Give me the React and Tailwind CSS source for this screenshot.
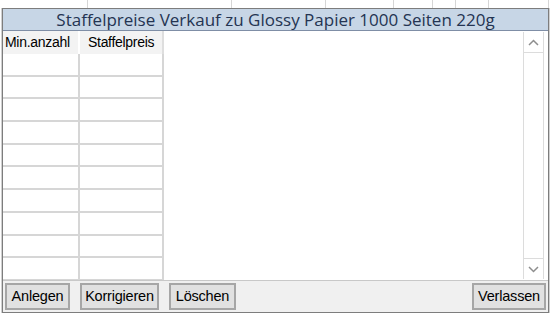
import React from "react";

const ROWS = Array.from({ length: 10 });

function Btn({ children, w }) {
  return (
    <div
      className={`h-[27px] ${w} flex items-center justify-center bg-[#e1e1e1] border-2 border-[#a6a6a6] text-[14.5px] text-black leading-none tracking-[-0.2px]`}
      style={{ fontFamily: '"Liberation Sans", Arial, sans-serif' }}
    >
      {children}
    </div>
  );
}

export default function App() {
  const bgCells = [88, 144, 94, 68, 39, 23, 33, 60];
  return (
    <div className="w-[552px] h-[313px] bg-white overflow-hidden flex flex-col">
      <div className="h-[8px] flex shrink-0">
        {bgCells.map((w, i) => (
          <div key={i} className="h-full border-r border-[#d6d6d6]" style={{ width: w }} />
        ))}
      </div>
      <div className="flex flex-1 min-h-0">
        <div className="w-[2px] border-r border-[#d0d0d0] shrink-0" />
        <div className="w-[547px] shrink-0 border border-[#7d7d7d] flex flex-col bg-[#f0f0f0]">
          <div
            className="h-[22px] shrink-0 bg-[#c7d6e6] border-b border-[#7f8ea6] flex items-center justify-center text-[17px] text-[#243452]"
            style={{ fontFamily: '"Open Sans", "Noto Sans", sans-serif' }}
          >
            Staffelpreise Verkauf zu Glossy Papier 1000 Seiten 220g
          </div>
          <div className="h-[250px] shrink-0 bg-white flex border-b border-[#c8c8c8]">
            <div
              className="flex flex-col overflow-hidden text-[14px] text-black"
              style={{ fontFamily: '"Liberation Sans", Arial, sans-serif' }}
            >
              <div className="flex h-[23px] shrink-0">
                <div className="w-[77px] bg-[#f3f3f3] border-r-2 border-white flex items-center pl-[2px] tracking-[-0.3px]">
                  Min.anzahl
                </div>
                <div className="w-[84px] bg-[#f3f3f3] border-r-2 border-[#dedede] flex items-center pl-[8px] tracking-[-0.3px]">
                  Staffelpreis
                </div>
              </div>
              {ROWS.map((_, i) => (
                <div key={i} className="flex h-[22.7px] shrink-0 border-b-2 border-[#d6d6d6]">
                  <div className="w-[77px] border-r-2 border-[#d6d6d6]" />
                  <div className="w-[84px] border-r-2 border-[#d6d6d6]" />
                </div>
              ))}
            </div>
            <div className="flex-1" />
            <div className="w-[21px] shrink-0 flex flex-col justify-between border-l border-r border-[#dcdcdc] mr-[4px] mt-[1px] mb-[1px]">
              <div className="h-[21px] border-b border-[#dcdcdc] flex items-center justify-center">
                <svg width="11" height="7" viewBox="0 0 11 7">
                  <path d="M1 6 L5.5 1.5 L10 6" fill="none" stroke="#8e8e8e" strokeWidth="1.5" />
                </svg>
              </div>
              <div className="h-[21px] border-t border-[#dcdcdc] flex items-center justify-center">
                <svg width="11" height="7" viewBox="0 0 11 7">
                  <path d="M1 1 L5.5 5.5 L10 1" fill="none" stroke="#8e8e8e" strokeWidth="1.5" />
                </svg>
              </div>
            </div>
          </div>
          <div className="flex-1 flex items-center px-[2px] gap-[10px]">
            <Btn w="w-[65px]">Anlegen</Btn>
            <Btn w="w-[79px]">Korrigieren</Btn>
            <Btn w="w-[67px]">Löschen</Btn>
            <div className="flex-1" />
            <Btn w="w-[74px]">Verlassen</Btn>
          </div>
        </div>
        <div className="flex-1 border-l border-[#d0d0d0]" />
      </div>
    </div>
  );
}
